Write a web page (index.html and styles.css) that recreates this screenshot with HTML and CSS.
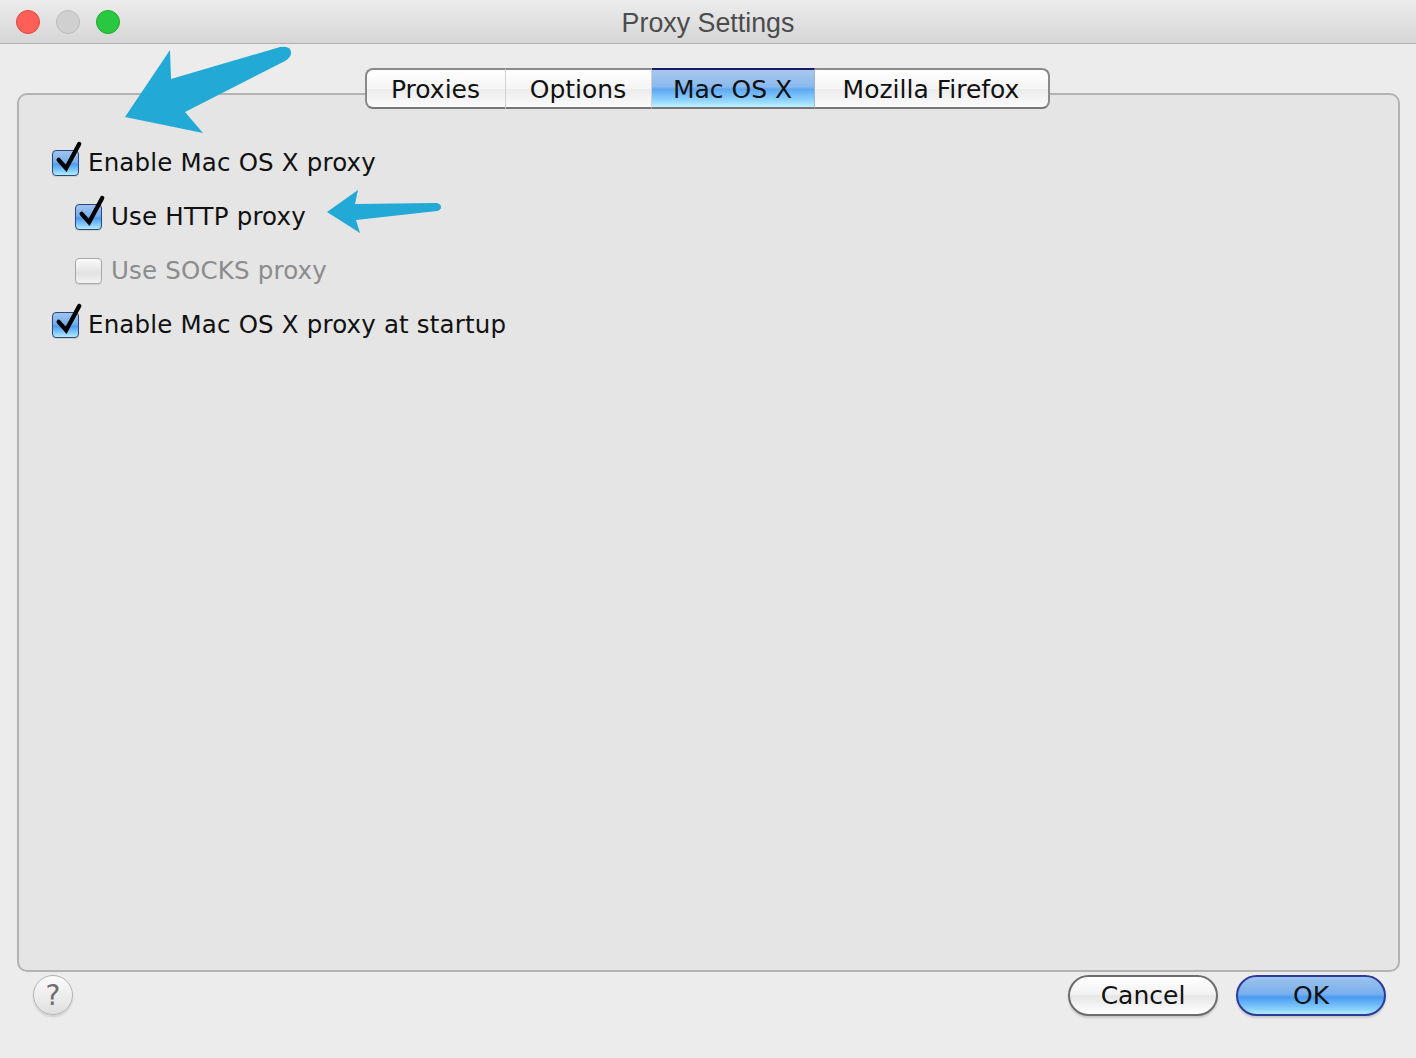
FILE: index.html
```html
<!DOCTYPE html>
<html>
<head>
<meta charset="utf-8">
<title>Proxy Settings</title>
<link rel="stylesheet" href="styles.css">
</head>
<body>
<div class="window">
  <div class="titlebar">
    <div class="lights">
      <span class="light red"></span>
      <span class="light gray"></span>
      <span class="light green"></span>
    </div>
    <div class="title">Proxy Settings</div>
  </div>
  <div class="content">
    <div class="tabs">
      <div class="tab t1">Proxies</div>
      <div class="tab t2">Options</div>
      <div class="tab t3 selected">Mac OS X</div>
      <div class="tab t4">Mozilla Firefox</div>
    </div>
    <div class="panel">
      <div class="row">
        <span class="cb checked"><svg viewBox="0 0 30 34" class="tick"><path d="M5 19 L13 28 L27 2" /></svg></span>
        <span class="label">Enable Mac OS X proxy</span>
      </div>
      <div class="row sub">
        <span class="cb checked"><svg viewBox="0 0 30 34" class="tick"><path d="M5 19 L13 28 L27 2" /></svg></span>
        <span class="label">Use HTTP proxy</span>
      </div>
      <div class="row sub disabled">
        <span class="cb"></span>
        <span class="label">Use SOCKS proxy</span>
      </div>
      <div class="row">
        <span class="cb checked"><svg viewBox="0 0 30 34" class="tick"><path d="M5 19 L13 28 L27 2" /></svg></span>
        <span class="label">Enable Mac OS X proxy at startup</span>
      </div>
    </div>
    <div class="bottom">
      <div class="help">?</div>
      <div class="buttons">
        <div class="btn cancel">Cancel</div>
        <div class="btn ok">OK</div>
      </div>
    </div>
  </div>
  <svg class="annot" width="1416" height="1058" viewBox="0 0 1416 1058">
    <path fill="#22a9d6" d="M125 117 L170 50 L171 79 L280 47 Q292 45 291 54 Q290 58 285 61 L185 112 L203 133 Z"/>
    <path fill="#22a9d6" d="M327 212 L358 190 L355 204 L437 203 Q441 204 441 207 Q441 210 437 211 L356 220 L360 233 Z"/>
  </svg>
</div>
</body>
</html>
```
FILE: styles.css
```css
html, body {
  margin: 0;
  padding: 0;
}
body {
  width: 1416px;
  height: 1058px;
  background: #ececec;
  overflow: hidden;
}
.window {
  position: relative;
  width: 1416px;
  height: 1058px;
  background: #ececec;
  font-family: "DejaVu Sans", "Open Sans", sans-serif;
}
.titlebar {
  height: 43px;
  border-bottom: 1px solid #b1b1b1;
  background: linear-gradient(#ececec, #d6d6d6);
  display: flex;
  align-items: center;
  position: relative;
}
.lights {
  display: flex;
  gap: 16px;
  padding-left: 16px;
  position: absolute;
  left: 0;
  top: 10px;
}
.light {
  width: 24px;
  height: 24px;
  border-radius: 50%;
  box-sizing: border-box;
}
.light.red { background: #fe5f57; border: 1px solid #e2463f; }
.light.gray { background: #d0d0d0; border: 1px solid #bdbdbd; }
.light.green { background: #2ac840; border: 1px solid #1eab2e; }
.title {
  flex: 1;
  text-align: center;
  font-family: "Liberation Sans", Arial, sans-serif;
  font-size: 26.8px;
  color: #4c4c4c;
  padding-top: 3px;
}
.content {
  display: flex;
  flex-direction: column;
  padding: 24px 16px 0 17px;
}
.tabs {
  display: flex;
  justify-content: center;
  position: relative;
  z-index: 2;
  margin-left: -3px;
  height: 41px;
}
.tab {
  box-sizing: border-box;
  height: 41px;
  display: flex;
  align-items: center;
  justify-content: center;
  font-size: 25px;
  color: #111;
  background: linear-gradient(#ffffff 0%, #f5f5f5 50%, #ececec 52%, #fbfbfb 100%);
  border-top: 2px solid #8a8a8a;
  border-bottom: 2px solid #777;
  border-right: 1px solid #d2d2d2;
  padding-top: 1px;
}
.t1 { width: 141px; border-left: 2px solid #8a8a8a; border-radius: 8px 0 0 8px; }
.t2 { width: 146px; }
.t3 { width: 163px; }
.t4 { width: 235px; border-right: 2px solid #8a8a8a; border-radius: 0 8px 8px 0; }
.tab.selected {
  background: linear-gradient(#a8c8ec 0%, #8ab9ee 45%, #5ea8f4 52%, #8cd0fb 80%, #bff2ff 100%);
  border-top: 2px solid #1a1c6a;
  border-right: 1px solid #9fb6cf;
}
.panel {
  margin-top: -16px;
  height: 879px;
  box-sizing: border-box;
  background: #e5e5e5;
  border: 2px solid #b3b3b3;
  border-radius: 10px;
  padding: 53px 0 0 33px;
  display: flex;
  flex-direction: column;
  gap: 26px;
}
.row {
  display: flex;
  align-items: center;
  height: 28px;
  gap: 9px;
}
.row.sub {
  padding-left: 23px;
}
.label {
  font-size: 24.5px;
  color: #111;
  letter-spacing: 0.18px;
}
.disabled .label {
  color: #8c8c8c;
}
.cb {
  position: relative;
  width: 27px;
  height: 26px;
  box-sizing: border-box;
  border-radius: 4px;
  border: 1px solid #a9a9a9;
  background: linear-gradient(#fbfbfb, #e2e2e2 60%, #f2f2f2);
  box-shadow: 0 1px 1px rgba(0,0,0,0.1);
  flex: none;
  margin-top: 2px;
}
.cb.checked {
  border: 1px solid #30457a;
  background: linear-gradient(#9fc4ec 0%, #78b0ee 45%, #4b9bf0 55%, #8bd1fb 85%, #b2ecff 100%);
}
.tick {
  position: absolute;
  left: 1px;
  top: -9px;
  width: 28px;
  height: 32px;
  overflow: visible;
}
.tick path {
  fill: none;
  stroke: #000;
  stroke-width: 4.6;
  stroke-linecap: round;
  stroke-linejoin: miter;
}
.bottom {
  display: flex;
  justify-content: space-between;
  align-items: flex-start;
  padding: 3px 14px 0 16px;
}
.help {
  width: 40px;
  height: 40px;
  box-sizing: border-box;
  border-radius: 50%;
  border: 1px solid #b4b4b4;
  background: linear-gradient(#fbfbfb, #ececec 55%, #e0e0e0);
  box-shadow: 0 2px 2px rgba(0,0,0,0.12);
  display: flex;
  align-items: center;
  justify-content: center;
  font-size: 28px;
  color: #6e6e6e;
}
.buttons {
  display: flex;
  gap: 18px;
}
.btn {
  width: 150px;
  height: 41px;
  box-sizing: border-box;
  border-radius: 21px;
  display: flex;
  align-items: center;
  justify-content: center;
  font-size: 25px;
  color: #111;
  box-shadow: 0 2px 2px rgba(0,0,0,0.15);
}
.cancel {
  border: 2px solid #6c6c6c;
  background: linear-gradient(#ffffff 0%, #f3f3f3 45%, #e6e6e6 52%, #f8f8f8 85%, #ffffff 100%);
}
.ok {
  border: 2px solid #2d3a9c;
  background: linear-gradient(#9cc3ec 0%, #79b0ee 45%, #4a9bf2 55%, #84cdfb 85%, #b0ecff 100%);
}
.annot {
  position: absolute;
  left: 0;
  top: 0;
  pointer-events: none;
  z-index: 5;
}
```
